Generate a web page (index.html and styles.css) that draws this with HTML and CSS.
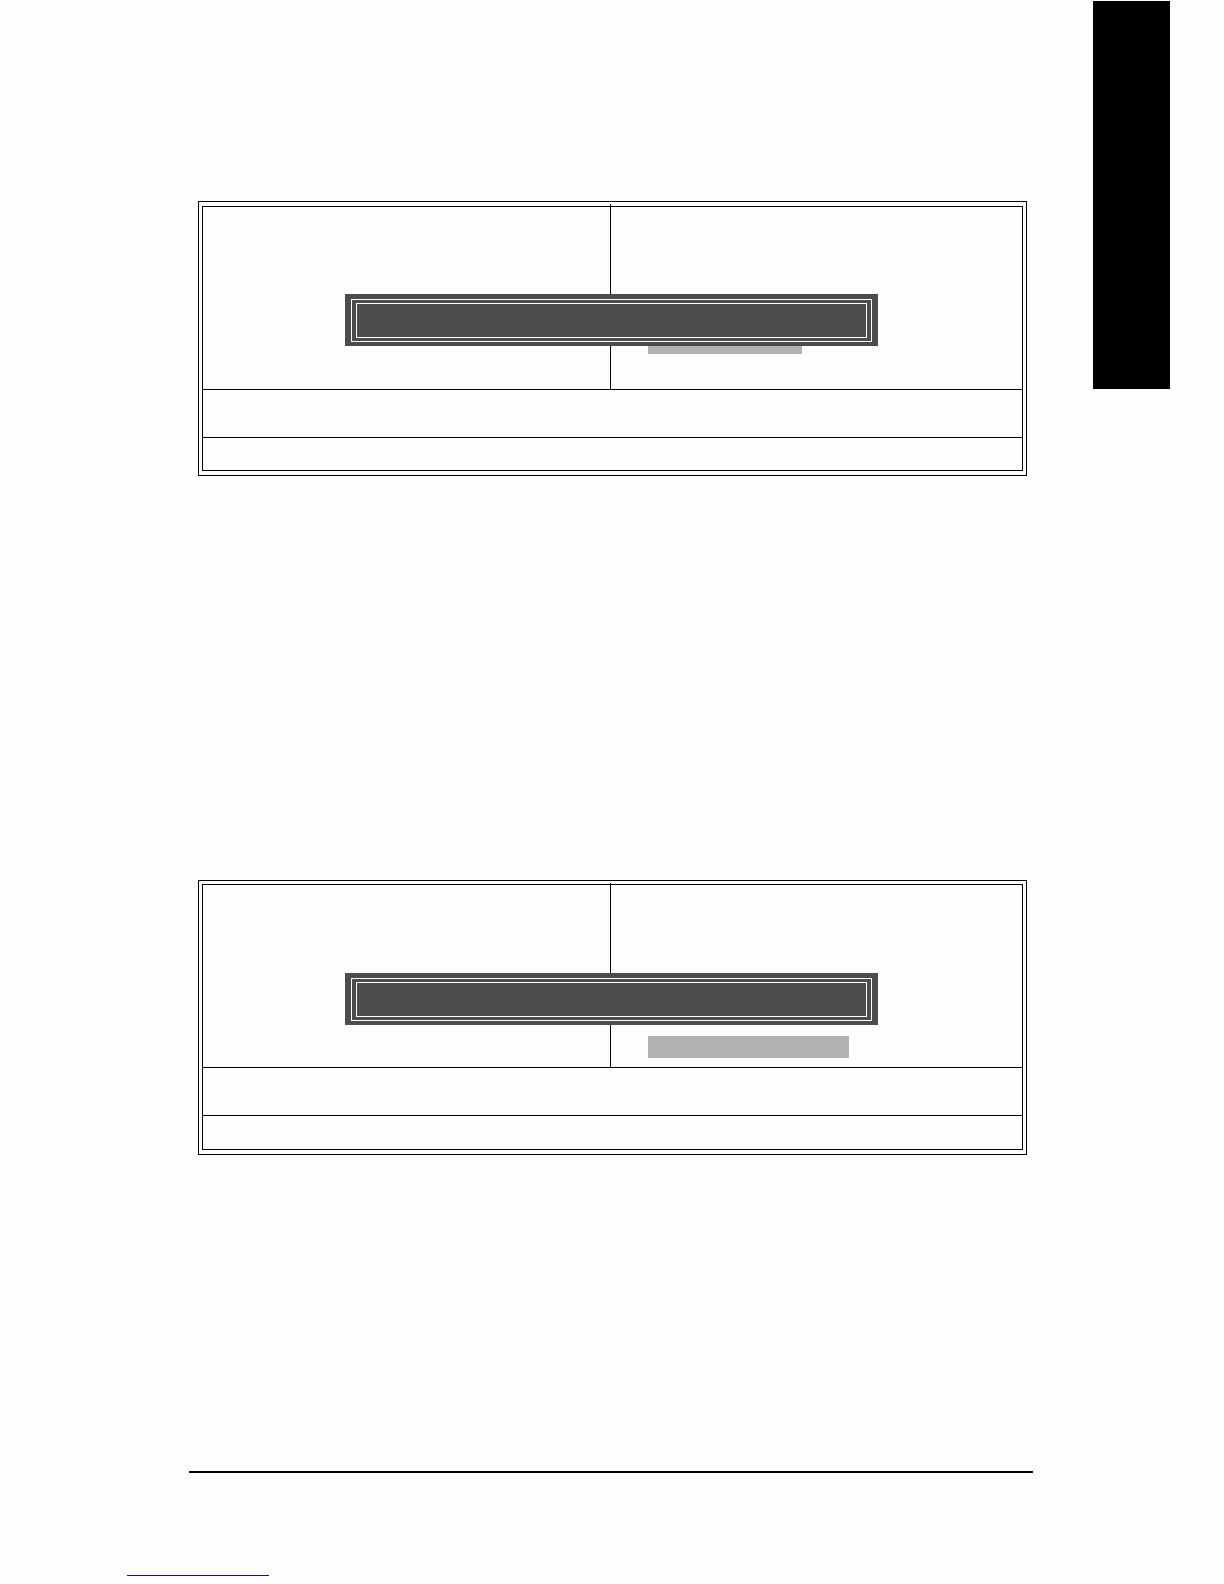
FILE: index.html
```html
<!DOCTYPE html>
<html lang="en">
<head>
<meta charset="utf-8">
<meta name="viewport" content="width=device-width, initial-scale=1">
<title>Manual page</title>
<link rel="stylesheet" href="styles.css">
</head>
<body>
<div class="page">
  <main class="content">
    <section class="screen screen-first">
      <div class="columns">
        <div class="column column-left"></div>
        <div class="column column-right"><div class="highlight"></div></div>
      </div>
      <div class="keys"></div>
      <div class="hint"></div>
      <div class="dialog"><div class="dialog-frame"><div class="dialog-body"></div></div></div>
    </section>
    <section class="screen screen-second">
      <div class="columns">
        <div class="column column-left"></div>
        <div class="column column-right"><div class="highlight"></div></div>
      </div>
      <div class="keys"></div>
      <div class="hint"></div>
      <div class="dialog"><div class="dialog-frame"><div class="dialog-body"></div></div></div>
    </section>
    <hr class="rule">
  </main>
  <aside class="side-tab"></aside>
</div>
<footer class="footer"><a class="footer-link" href="#" aria-label="Home"></a></footer>
</body>
</html>
```
FILE: styles.css
```css
* {
  box-sizing: border-box;
}

body {
  margin: 0;
  background: #fefefe;
  font-family: "Liberation Sans", sans-serif;
}

.page {
  display: grid;
  grid-template-columns: 1fr 77px;
  align-items: start;
  padding-right: 54px;
}

.content {
  padding: 201px 60px 0 189px;
}

.side-tab {
  height: 388px;
  margin-top: 1px;
  background: #000;
}

/* Setup screen: double outline around two columns and two text rows */
.screen {
  position: relative;
  display: flex;
  flex-direction: column;
  min-height: 275px;
  margin: 0 6px 0 9px;
  padding: 3px 3px 4px;
  border: 1px solid #000;
}

.screen-first {
  padding-top: 4px;
}

.screen-second {
  margin-top: 404px;
}

.columns {
  display: grid;
  grid-template-columns: 408fr 411fr;
  height: 184px;
  border: 1px solid #000;
}

.column-left {
  margin-top: -3px;
  border-right: 1px solid #000;
}

.screen-second .column-left {
  margin-top: -2px;
}

.column-right {
  display: flex;
  align-items: flex-end;
  padding: 0 37px 9px;
}

.highlight {
  width: 201px;
  height: 22px;
  background: #b2b2b2;
}

.screen-first .column-right {
  padding-bottom: 35px;
}

.screen-first .highlight {
  width: 154px;
}

.keys,
.hint {
  border: 1px solid #000;
  border-top: 0;
}

.keys {
  height: 48px;
}

.hint {
  flex: 1;
}

/* Message box lying over the columns */
.dialog {
  position: absolute;
  top: 92px;
  left: 146px;
  right: 148px;
  padding: 5px 6px 4px;
  background: #4c4c4c;
}

.dialog-frame {
  padding: 3px 4px;
  border: 1px solid #fff;
}

.dialog-body {
  height: 35px;
  border: 1px solid #fff;
}

.rule {
  height: 2px;
  margin: 316px 0 0;
  border: 0;
  background: #000;
}

.footer {
  padding: 102px 0 8px 127px;
}

.footer-link {
  display: block;
  width: 142px;
  border-bottom: 1px solid #10109c;
}
```
